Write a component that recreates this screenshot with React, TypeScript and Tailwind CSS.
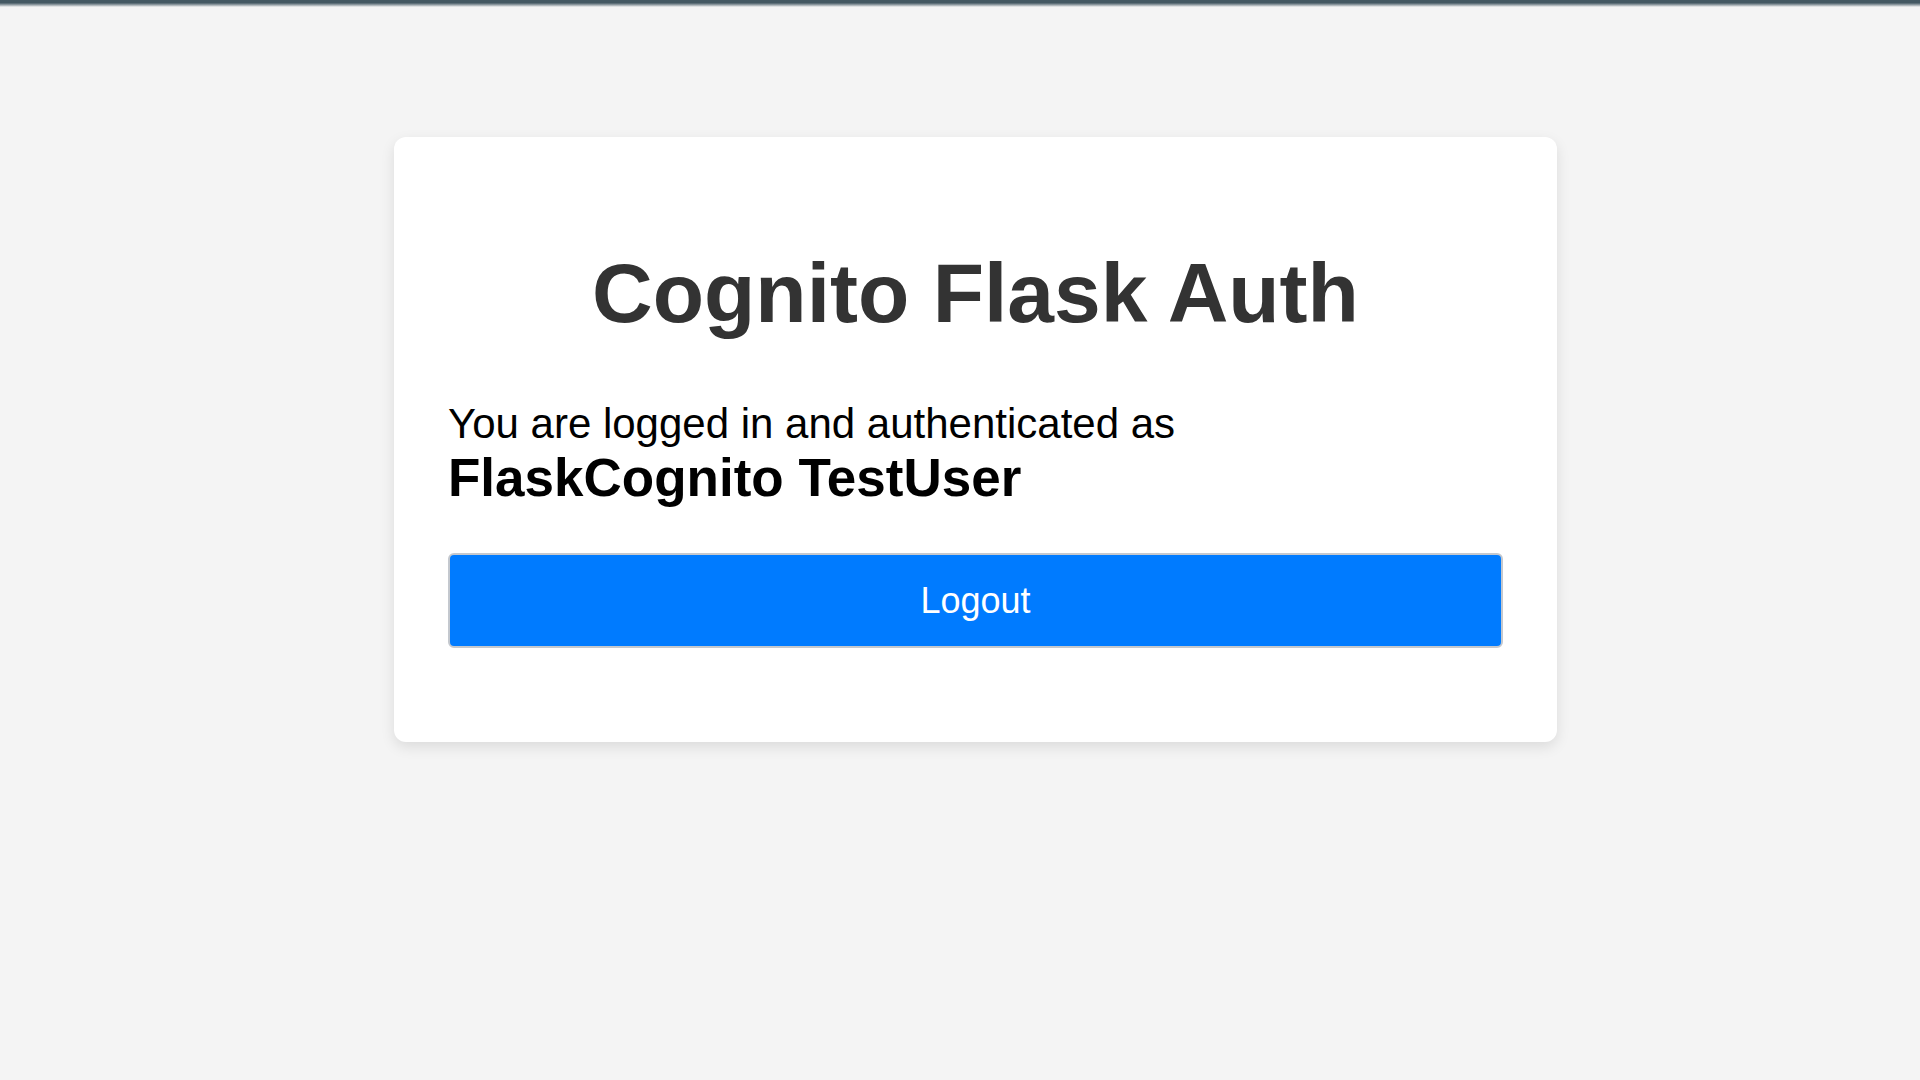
export default function App() {
  return (
    <div className="flex min-h-screen flex-col bg-[#f4f4f4] font-['Liberation_Sans',Arial,sans-serif] text-black">
      <div className="h-[7px] bg-linear-to-b from-[#445862] from-40% to-[#f4f4f4]" />
      <div className="pt-[130px] pl-[31px]">
        <main className="mx-auto w-full max-w-[1163px] rounded-xl bg-white px-[54px] pt-[108px] pb-[94px] shadow-[0_5px_14px_rgba(0,0,0,0.1)]">
          <h1 className="text-center text-[84px] leading-[96px] font-bold text-[#333333]">Cognito Flask Auth</h1>
          <p className="mt-[56px] text-[42px] leading-[54px]">
            You are logged in and authenticated as
            <strong className="block text-[53px]">FlaskCognito TestUser</strong>
          </p>
          <button type="button" className="mt-[48px] h-[95px] w-full rounded-md border-2 border-[#c4c8ce] bg-[#007bff] text-[36px] text-white">
            Logout
          </button>
        </main>
      </div>
    </div>
  );
}
